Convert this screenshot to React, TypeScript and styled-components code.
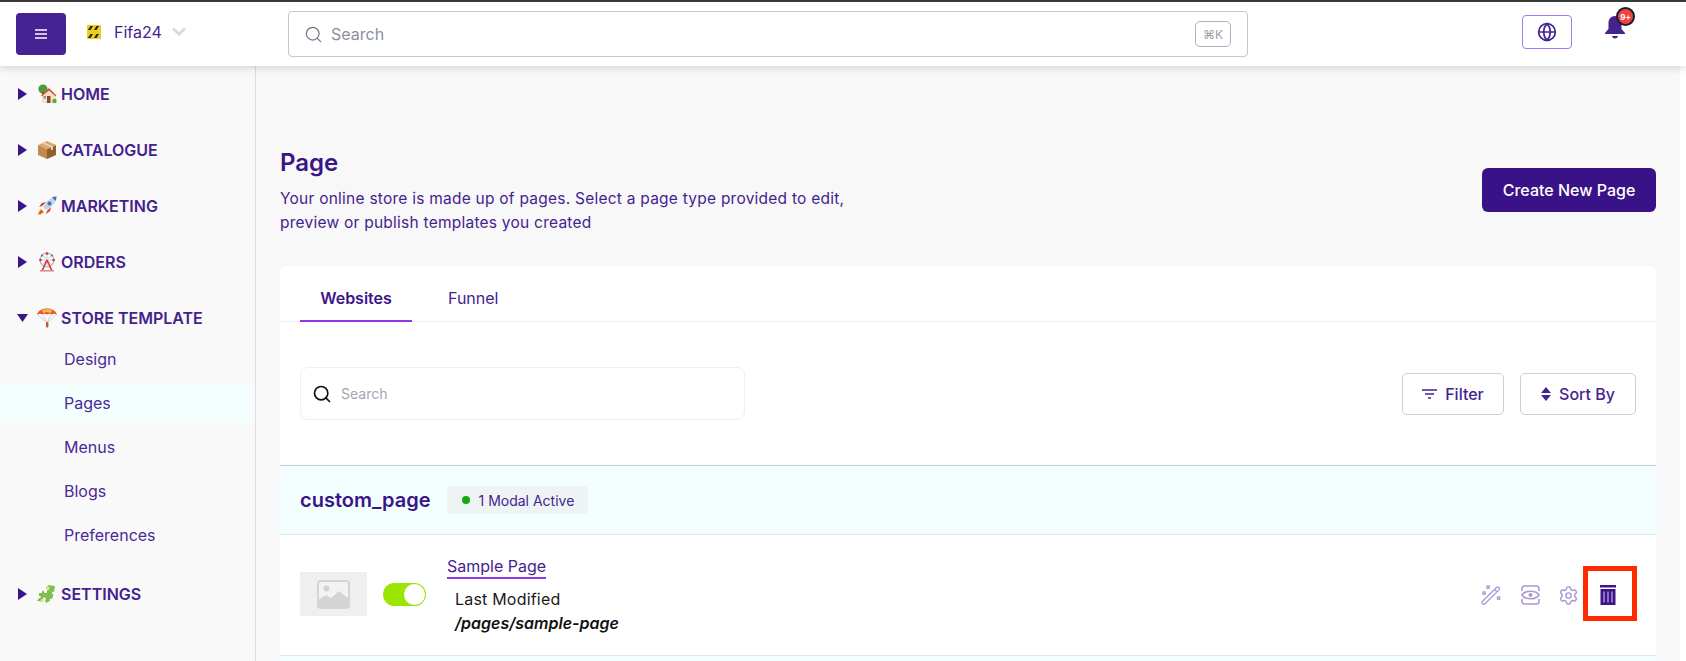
import React from "react";
import styled, { createGlobalStyle } from "styled-components";
import { Search, Globe, Settings } from "lucide-react";

const GlobalStyle = createGlobalStyle`
  html, body { margin: 0; padding: 0; background: #ffffff; overflow: hidden; }
  body { font-family: "Inter", "Liberation Sans", sans-serif; color: #3b1489; }
  * { box-sizing: border-box; }
`;

const Shell = styled.div`
  width: 1686px;
  height: 661px;
  overflow: hidden;
  display: flex;
  flex-direction: column;
`;

const TopBar = styled.header`
  flex: none;
  height: 66px;
  border-top: 2px solid #3a3a3a;
  background: #ffffff;
  box-shadow: 0 2px 8px rgba(40, 40, 60, 0.18);
  display: flex;
  align-items: center;
  padding: 0 60px 0 16px;
  position: relative;
  z-index: 2;
`;

const MenuButton = styled.button`
  width: 50px;
  height: 42px;
  border: 0;
  border-radius: 4px;
  background: #452393;
  display: flex;
  flex-direction: column;
  align-items: center;
  justify-content: center;
  gap: 2px;
  padding: 0;
`;

const MenuLine = styled.span`
  width: 12px;
  height: 2px;
  background: #cfc4e8;
`;

const StoreSwitch = styled.div`
  display: flex;
  align-items: center;
  width: 201px;
  margin-left: 21px;
  margin-top: -5px;
  font-size: 16px;
  color: #45238f;
`;

const StoreName = styled.span`
  margin-left: 13px;
  margin-right: 10px;
`;

const SearchBar = styled.div`
  width: 960px;
  height: 46px;
  border: 1px solid #c6c8d0;
  border-radius: 4px;
  display: flex;
  align-items: center;
  padding: 0 16px 0 15px;
  color: #6b7280;
  font-size: 16px;
`;

const SearchHint = styled.span`
  flex: 1;
  margin-left: 8px;
  color: #8b8f99;
`;

const KeyHint = styled.span`
  width: 36px;
  height: 26px;
  border: 1px solid #aeb2bc;
  border-radius: 5px;
  display: flex;
  align-items: center;
  justify-content: center;
  font-size: 12px;
  color: #9a9ea8;
`;

const GlobeButton = styled.div`
  width: 50px;
  height: 34px;
  margin-left: 274px;
  margin-top: -4px;
  border: 1.5px solid #a77bf3;
  border-radius: 4px;
  display: flex;
  align-items: center;
  justify-content: center;
  color: #45238f;
`;

const BellWrap = styled.div`
  position: relative;
  width: 22px;
  height: 24px;
  margin-left: 32px;
  margin-top: -14px;
`;

const Badge = styled.span`
  position: absolute;
  top: -8px;
  left: 12px;
  width: 19px;
  height: 19px;
  border-radius: 50%;
  background: #ef4444;
  border: 2px solid #1c1c2e;
  color: #ffffff;
  font-size: 8px;
  font-weight: 700;
  display: flex;
  align-items: center;
  justify-content: center;
`;

const Body = styled.div`
  flex: 1;
  display: flex;
  min-height: 0;
`;

const Sidebar = styled.nav`
  flex: none;
  width: 256px;
  background: #f9f9f9;
  border-right: 1px solid #dcdde8;
  padding-top: 14px;
`;

const NavHead = styled.div<{ $after?: number; $before?: number }>`
  height: 28px;
  display: flex;
  align-items: center;
  margin-top: ${p => p.$before ?? 0}px;
  margin-bottom: ${p => p.$after ?? 28}px;
  padding-left: 18px;
  font-size: 16px;
  font-weight: 600;
  color: #44218f;
  white-space: nowrap;
`;

const Caret = styled.span<{ $open?: boolean }>`
  width: 9px;
  height: 12px;
  flex: none;
  background: #3b1489;
  clip-path: polygon(0 0, 100% 50%, 0 100%);
  ${p => p.$open ? `
    width: 11px;
    height: 8px;
    margin: 0 -1px;
    clip-path: polygon(0 0, 100% 0, 50% 100%);
  ` : ""}
`;

const EmojiBox = styled.span`
  width: 20px;
  height: 20px;
  flex: none;
  margin: 0 4px 0 10px;
  display: flex;
`;

const NavSub = styled.div<{ $active?: boolean }>`
  width: 250px;
  height: 40px;
  margin-bottom: 4px;
  padding-left: 64px;
  display: flex;
  align-items: center;
  border-radius: 4px;
  font-size: 16px;
  color: #4a2a96;
  background: ${p => p.$active ? "#f2fffe" : "transparent"};
`;

const Main = styled.main`
  flex: 1;
  min-width: 0;
  background: #f8f8f8;
  padding: 0 24px;
`;

const Track = styled.div`
  flex: none;
  width: 6px;
  background: #ffffff;
`;

const PageHead = styled.div`
  display: flex;
  justify-content: space-between;
  align-items: flex-start;
  height: 200px;
  padding-top: 81px;
`;

const Title = styled.h1`
  margin: 0;
  font-size: 24px;
  line-height: 32px;
  font-weight: 600;
  color: #3b1489;
`;

const Lead = styled.p`
  margin: 8px 0 0;
  width: 600px;
  font-size: 15.5px;
  line-height: 24px;
  color: #45238f;
  letter-spacing: 0.24px;
`;

const CreateButton = styled.button`
  width: 174px;
  height: 44px;
  margin-top: 21px;
  border: 0;
  border-radius: 6px;
  background: #3a1287;
  color: #ffffff;
  font-family: inherit;
  font-size: 16px;
  font-weight: 500;
`;

const Card = styled.section`
  background: #ffffff;
  border-radius: 6px 6px 0 0;
`;

const Tabs = styled.div`
  height: 56px;
  padding: 0 20px;
  display: flex;
  align-items: stretch;
  border-bottom: 1px solid #f0f0f3;
`;

const Tab = styled.div<{ $active?: boolean }>`
  width: ${p => p.$active ? "112px" : "auto"};
  margin-left: ${p => p.$active ? "0" : "36px"};
  padding-top: 10px;
  display: flex;
  align-items: center;
  justify-content: center;
  font-size: 16px;
  font-weight: ${p => p.$active ? 600 : 400};
  color: ${p => p.$active ? "#3b1489" : "#45238f"};
  border-bottom: 2px solid ${p => p.$active ? "#9333ea" : "transparent"};
  margin-bottom: -1px;
`;

const Tools = styled.div`
  height: 143px;
  padding: 0 20px;
  display: flex;
  align-items: center;
  gap: 16px;
`;

const FilterSearch = styled.div`
  width: 445px;
  height: 53px;
  margin-right: auto;
  border: 1px solid #efeff2;
  border-radius: 8px;
  display: flex;
  align-items: center;
  padding-left: 11px;
  color: #111111;
`;

const FilterHint = styled.span`
  margin-left: 9px;
  font-size: 14px;
  color: #a3a6b2;
`;

const ToolButton = styled.div<{ $w: number }>`
  width: ${p => p.$w}px;
  height: 42px;
  border: 1px solid #cfcfd4;
  border-radius: 5px;
  display: flex;
  align-items: center;
  justify-content: center;
  gap: 8px;
  font-size: 16px;
  font-weight: 500;
  color: #45238f;
`;

const GroupHead = styled.div`
  height: 70px;
  padding: 0 20px;
  display: flex;
  align-items: center;
  background: #f2fffe;
  border-top: 1px solid #c9ccd8;
  border-bottom: 1px solid #e3e6f2;
`;

const GroupName = styled.span`
  font-size: 20px;
  font-weight: 600;
  color: #3b1489;
`;

const StatusPill = styled.span`
  width: 141px;
  height: 28px;
  margin-left: 16px;
  border-radius: 4px;
  background: #eef4f4;
  display: flex;
  align-items: center;
  padding-left: 15px;
  gap: 9px;
  font-size: 14px;
  color: #45238f;
`;

const Dot = styled.span`
  width: 8px;
  height: 8px;
  border-radius: 50%;
  background: #16a816;
`;

const PageRow = styled.div`
  height: 121px;
  padding: 0 20px;
  display: flex;
  align-items: center;
  border-bottom: 1px solid #e3e6f2;
`;

const Thumb = styled.div`
  width: 67px;
  height: 44px;
  flex: none;
  margin-top: -2px;
  background: #efefef;
  display: flex;
  align-items: center;
  justify-content: center;
`;

const Toggle = styled.div`
  width: 43px;
  height: 23px;
  margin-left: 16px;
  margin-top: -2px;
  border-radius: 12px;
  background: #9be600;
  display: flex;
  justify-content: flex-end;
  align-items: center;
  padding-right: 1px;
`;

const Knob = styled.span`
  width: 21px;
  height: 21px;
  border-radius: 50%;
  background: #ffffff;
`;

const PageInfo = styled.div`
  margin-left: 21px;
  flex: 1;
`;

const PageLink = styled.a`
  display: inline-block;
  font-size: 16px;
  line-height: 20px;
  color: #45238f;
  border-bottom: 2px solid #9333ea;
  padding-bottom: 1px;
`;

const Modified = styled.div`
  margin: 8px 0 0 8px;
  font-size: 16px;
  line-height: 24px;
  color: #1a1a1a;
  letter-spacing: 0.2px;
`;

const PagePath = styled.div`
  margin-left: 8px;
  font-size: 16px;
  line-height: 24px;
  font-weight: 600;
  font-style: italic;
  color: #111111;
`;

const RowIcons = styled.div`
  display: flex;
  align-items: center;
  gap: 18px;
  margin-right: 20px;
  color: #ab97d6;

  > svg:first-child {
    margin-right: 2px;
  }
`;

const DeleteMark = styled.span`
  position: relative;
  display: flex;
  margin-left: 3px;
  color: #3b1489;
`;

const RedBox = styled.span`
  position: absolute;
  left: -17px;
  top: -19px;
  width: 54px;
  height: 55px;
  border: 5px solid #ff2a00;
`;

const NextGroup = styled.div`
  height: 40px;
  background: #f2fffe;
`;

const HazardIcon = () => (
  <svg width="14" height="14" viewBox="0 0 14 14">
    <rect width="14" height="14" fill="#e8cf1e" />
    <path d="M1 5 3.500 1H6L3.500 5zM7 5 9.500 1H12L9.500 5zM1 13l2.500-4H6l-2.500 4zM7 13l2.500-4H12l-2.500 4z" fill="#222" />
  </svg>
);

const HomeEmoji = () => (
  <svg viewBox="0 0 20 20" width="20" height="20">
    <circle cx="6" cy="5" r="4.600" fill="#4e9a3a" />
    <rect x="5" y="8" width="2" height="5" fill="#7a4a24" />
    <path d="M5 11l7-6 7 6v8H5z" fill="#efe2c4" />
    <path d="M4 11.500l8-7.500 7.500 7.500-1 .8L12 6.500 5 12.300z" fill="#d4513a" />
    <rect x="10" y="12" width="3.500" height="7" fill="#8a4a2a" />
    <rect x="6.500" y="12" width="2.500" height="2.500" fill="#6f9ec9" />
    <circle cx="17.500" cy="17" r="2.200" fill="#5aa63f" />
  </svg>
);

const BoxEmoji = () => (
  <svg viewBox="0 0 20 20" width="20" height="20">
    <path d="M1 5l9 4v10l-9-4z" fill="#c08a4e" />
    <path d="M19 5l-9 4v10l9-4z" fill="#8f5f30" />
    <path d="M1 5l9-4 9 4-9 4z" fill="#d9a76c" />
    <path d="M5 3.200l9 4v3l2-.8v-3l-9-4z" fill="#efd6ae" />
  </svg>
);

const RocketEmoji = () => (
  <svg viewBox="0 0 20 20" width="20" height="20">
    <path d="M1 19c0-3 1.500-5 3-6l3 3c-1 1.500-3 3-6 3z" fill="#f7a823" />
    <path d="M2 18c.5-2 1-3 2.500-4l1.500 1.500c-1 1.200-2 2-4 2.500z" fill="#e8402a" />
    <path d="M5 10l-3 1 3-4 4-1zM10 15l-1 3 4-3 1-4z" fill="#d8342a" />
    <path d="M6 11C9 5 14 1 19.500.500 19 6 15 11 9 14z" fill="#c9d3e3" />
    <path d="M15 1.300c1.500-.5 3-.7 4.500-.8-.1 1.500-.3 3-.8 4.500z" fill="#3f6fc2" />
    <circle cx="12.500" cy="7.500" r="2" fill="#3f6fc2" />
  </svg>
);

const WheelEmoji = () => (
  <svg viewBox="0 0 20 20" width="20" height="20" fill="none">
    <circle cx="10" cy="8" r="7" stroke="#a9b0c8" strokeWidth="1.200" />
    <path d="M10 1v14M3 8h14M5 3l10 10M15 3L5 13" stroke="#c9ccd8" strokeWidth=".8" />
    <circle cx="10" cy="1.500" r="1.300" fill="#d8342a" />
    <circle cx="3.500" cy="8" r="1.300" fill="#d8342a" />
    <circle cx="16.500" cy="8" r="1.300" fill="#d8342a" />
    <circle cx="5" cy="3.500" r="1.100" fill="#3f6fc2" />
    <circle cx="15" cy="3.500" r="1.100" fill="#3f6fc2" />
    <path d="M10 8L5 19M10 8l5 11" stroke="#d8342a" strokeWidth="1.600" />
    <rect x="3" y="18" width="14" height="1.500" fill="#d88a8a" />
  </svg>
);

const ChuteEmoji = () => (
  <svg viewBox="0 0 20 20" width="20" height="20" fill="none">
    <path d="M0 7C1 2 6 .500 10 .500S19 2 20 7c-2-1.500-4-1.500-5-.5-1.500-1-3.500-1-5 0-1.500-1-3.500-1-5 0-1-1-3-1-5 .5z" fill="#e4572e" />
    <path d="M5 2C7 1 13 1 15 2l-1 3c-2-1-6-1-8 0z" fill="#f3c13a" />
    <path d="M1 7l9 8M19 7l-9 8M6 7l4 8M14 7l-4 8" stroke="#b9b9c0" strokeWidth=".6" />
    <rect x="9" y="14" width="2.400" height="5.500" rx="1" fill="#c0523a" />
  </svg>
);

const PuzzleEmoji = () => (
  <svg viewBox="0 0 20 20" width="20" height="20">
    <path d="M2 9h3c-1-3 3-3 2 0h3V6c3 1 3-3 0-2l1-3 7 1-1 6c-2-1-3 2-.5 2.500L15 15c-2-1-3 1-2 2l-4 2-1-3c2-1 0-3.500-2-2l-1 3.500L0 17l2-3c2 1 3-2 0-2z" fill="#7fbf4d" />
    <path d="M9 2l4 1-1 3-3-1zM4 15l3 .5-1 3-3-1z" fill="#c7e58e" />
  </svg>
);

const ImagePlaceholder = () => (
  <svg width="33" height="29" viewBox="0 0 33 29">
    <rect x="1" y="1" width="31" height="27" rx="3" fill="#f3f3f3" stroke="#d4d4d4" strokeWidth="2" />
    <circle cx="9.500" cy="8.500" r="3" fill="#d4d4d4" />
    <path d="M1 20l8-5 5 3 8-7 10 8v6a3 3 0 0 1-3 3H4a3 3 0 0 1-3-3z" fill="#d4d4d4" />
  </svg>
);

const BellIcon = () => (
  <svg width="22" height="24" viewBox="0 0 22 24">
    <path d="M11 1c-4 0-6.500 3-6.500 7v6L1 18v1h20v-1l-3.500-4V8C17.500 4 15 1 11 1z" fill="#45238f" />
    <path d="M8 21h6c0 1-1.500 2.500-3 2.500S8 22 8 21z" fill="#45238f" />
  </svg>
);

const WandIcon = () => (
  <svg width="20" height="20" viewBox="0 0 20 20" fill="none" stroke="currentColor" strokeWidth="1.300">
    <path d="M1.500 16.300 15.500 2.500a1.700 1.700 0 0 1 2.400 2.400L4 18.700a1.700 1.700 0 0 1-2.500-2.400z" />
    <path d="M13.500 4.500l2.300 2.300" />
    <rect x="6" y="1" width="2.200" height="2.200" />
    <rect x="2" y="7" width="2.200" height="2.200" />
    <rect x="16.500" y="12" width="2.200" height="2.200" />
  </svg>
);

const EyeFrameIcon = () => (
  <svg width="19" height="20" viewBox="0 0 19 20" fill="none" stroke="currentColor" strokeWidth="1.600">
    <path d="M1 6V3.500A2.500 2.500 0 0 1 3.500 1h12A2.500 2.500 0 0 1 18 3.500V6M1 14v2.500A2.500 2.500 0 0 0 3.500 19h12a2.500 2.500 0 0 0 2.500-2.500V14" />
    <path d="M1 10c3-5 14-5 17 0-3 5-14 5-17 0z" />
    <circle cx="9.500" cy="10" r="2" fill="currentColor" stroke="none" />
  </svg>
);

const TrashIcon = () => (
  <svg width="16" height="20" viewBox="0 0 16 20">
    <rect x="0" y="0" width="16" height="2.500" fill="currentColor" />
    <path d="M.500 4h15v16H.500z" fill="currentColor" />
    <path d="M4 6.500v11M8 6.500v11M12 6.500v11" stroke="#d9d0ee" strokeWidth="1" />
  </svg>
);

const FilterIcon = () => (
  <svg width="15" height="10" viewBox="0 0 15 10" stroke="#45238f" strokeWidth="1.400">
    <path d="M0 1h15M3 5h9M6 9h3" />
  </svg>
);

const SortIcon = () => (
  <svg width="10" height="14" viewBox="0 0 10 14" fill="#45238f">
    <path d="M5 0l5 6H0zM5 14l-5-6h10z" />
  </svg>
);

const ChevronIcon = () => (
  <svg width="14" height="9" viewBox="0 0 14 9" fill="none" stroke="#dcd6ec" strokeWidth="3">
    <path d="M1 1.500l6 5.500 6-5.500" />
  </svg>
);

const navTop = [
  { label: "HOME", icon: <HomeEmoji /> },
  { label: "CATALOGUE", icon: <BoxEmoji /> },
  { label: "MARKETING", icon: <RocketEmoji /> },
  { label: "ORDERS", icon: <WheelEmoji /> },
];
const subItems = ["Design", "Pages", "Menus", "Blogs", "Preferences"];

const App = (): JSX.Element => {
  return (
    <Shell>
      <GlobalStyle />
      <TopBar>
        <MenuButton>
          <MenuLine />
          <MenuLine />
          <MenuLine />
        </MenuButton>
        <StoreSwitch>
          <HazardIcon />
          <StoreName>Fifa24</StoreName>
          <ChevronIcon />
        </StoreSwitch>
        <SearchBar>
          <Search size={19} strokeWidth={1.5} />
          <SearchHint>Search</SearchHint>
          <KeyHint>⌘K</KeyHint>
        </SearchBar>
        <GlobeButton>
          <Globe size={20} strokeWidth={2} />
        </GlobeButton>
        <BellWrap>
          <BellIcon />
          <Badge>9+</Badge>
        </BellWrap>
      </TopBar>
      <Body>
        <Sidebar>
          {navTop.map(item => (
            <NavHead key={item.label}>
              <Caret />
              <EmojiBox>{item.icon}</EmojiBox>
              {item.label}
            </NavHead>
          ))}
          <NavHead $after={7}>
            <Caret $open />
            <EmojiBox><ChuteEmoji /></EmojiBox>
            STORE TEMPLATE
          </NavHead>
          {subItems.map(name => (
            <NavSub key={name} $active={name === "Pages"}>{name}</NavSub>
          ))}
          <NavHead $before={25}>
            <Caret />
            <EmojiBox><PuzzleEmoji /></EmojiBox>
            SETTINGS
          </NavHead>
        </Sidebar>
        <Main>
          <PageHead>
            <div>
              <Title>Page</Title>
              <Lead>
                Your online store is made up of pages. Select a page type provided to edit,
                <br />
                preview or publish templates you created
              </Lead>
            </div>
            <CreateButton>Create New Page</CreateButton>
          </PageHead>
          <Card>
            <Tabs>
              <Tab $active>Websites</Tab>
              <Tab>Funnel</Tab>
            </Tabs>
            <Tools>
              <FilterSearch>
                <Search size={20} strokeWidth={2} />
                <FilterHint>Search</FilterHint>
              </FilterSearch>
              <ToolButton $w={102}><FilterIcon />Filter</ToolButton>
              <ToolButton $w={116}><SortIcon />Sort By</ToolButton>
            </Tools>
            <GroupHead>
              <GroupName>custom_page</GroupName>
              <StatusPill><Dot />1 Modal Active</StatusPill>
            </GroupHead>
            <PageRow>
              <Thumb><ImagePlaceholder /></Thumb>
              <Toggle><Knob /></Toggle>
              <PageInfo>
                <PageLink>Sample Page</PageLink>
                <Modified>Last Modified</Modified>
                <PagePath>/pages/sample-page</PagePath>
              </PageInfo>
              <RowIcons>
                <WandIcon />
                <EyeFrameIcon />
                <Settings size={21} strokeWidth={1.7} />
                <DeleteMark>
                  <TrashIcon />
                  <RedBox />
                </DeleteMark>
              </RowIcons>
            </PageRow>
            <NextGroup />
          </Card>
        </Main>
        <Track />
      </Body>
    </Shell>
  );
};

export default App;
